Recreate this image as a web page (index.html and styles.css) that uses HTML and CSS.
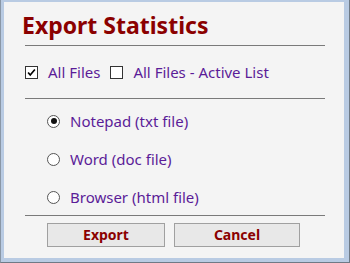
FILE: index.html
```html
<!DOCTYPE html>
<html>
<head>
<meta charset="utf-8">
<link rel="stylesheet" href="styles.css">
</head>
<body>
<div class="frame">
  <div class="window">
    <div class="content">
      <h1 class="title">Export Statistics</h1>
      <hr class="rule">
      <div class="checks">
        <label class="opt"><span class="box checked"><svg viewBox="0 0 13 13" width="13" height="13"><path d="M2.5 6.5 L5 9.5 L10.5 3" fill="none" stroke="#000" stroke-width="2"/></svg></span><span class="lbl">All Files</span></label>
        <label class="opt"><span class="box"></span><span class="lbl">All Files - Active List</span></label>
      </div>
      <hr class="rule">
      <div class="radios">
        <label class="ropt"><span class="radio on"></span><span class="lbl">Notepad (txt file)</span></label>
        <label class="ropt"><span class="radio"></span><span class="lbl">Word (doc file)</span></label>
        <label class="ropt"><span class="radio"></span><span class="lbl">Browser (html file)</span></label>
      </div>
      <hr class="rule">
      <div class="buttons">
        <button class="btn export">Export</button>
        <button class="btn cancel">Cancel</button>
      </div>
    </div>
  </div>
</div>
</body>
</html>
```
FILE: styles.css
```css
html, body {
  margin: 0;
  padding: 0;
  background: #f4f4f4;
}
.frame {
  width: 350px;
  height: 263px;
  box-sizing: border-box;
  background: #b9cbe3;
  border-left: 1px solid #8a97a6;
  border-right: 1px solid #6f7a86;
  border-bottom: 1px solid #6f7a86;
  padding: 2px 5px 4px 3px;
  display: flex;
}
.window {
  flex: 1;
  background: #f4f4f4;
}
.content {
  margin-left: 21px;
  width: 300px;
  font-family: "Noto Sans", "Open Sans", sans-serif;
}
.title {
  margin: 0 0 0 -3px;
  padding: 8px 0 0 0;
  font-size: 23px;
  line-height: 31px;
  font-weight: bold;
  color: #8b0000;
}
.rule {
  margin: 0;
  border: none;
  height: 1px;
  background: #7a7a7a;
}
.title + .rule { margin-top: 4px; }
.checks {
  display: flex;
  gap: 10px;
  padding: 16px 0 16px 0;
  align-items: center;
}
.opt, .ropt {
  display: flex;
  align-items: center;
  gap: 10px;
}
.box {
  width: 11px;
  height: 11px;
  border: 1px solid #333;
  background: #fff;
  display: flex;
  align-items: center;
  justify-content: center;
}
.box svg { display: block; }
.lbl {
  font-size: 15px;
  line-height: 20px;
  color: #5b1c98;
}
.radios {
  display: flex;
  flex-direction: column;
  gap: 18px;
  padding: 12px 0 8px 22px;
}
.radio {
  width: 11px;
  height: 11px;
  border: 1px solid #555;
  border-radius: 50%;
  background: #fff;
  position: relative;
}
.radio.on::after {
  content: "";
  position: absolute;
  left: 2.5px;
  top: 2.5px;
  width: 6px;
  height: 6px;
  border-radius: 50%;
  background: #111;
}
.buttons {
  display: flex;
  gap: 9px;
  padding: 7px 0 0 22px;
}
.btn {
  height: 24px;
  border: 1px solid #a0a0a0;
  background: #e8e8e8;
  color: #8b0000;
  font-family: "Noto Sans", "Open Sans", sans-serif;
  font-weight: bold;
  font-size: 14px;
  line-height: 20px;
  padding: 0;
}
.export { width: 118px; }
.cancel { width: 126px; }
```
